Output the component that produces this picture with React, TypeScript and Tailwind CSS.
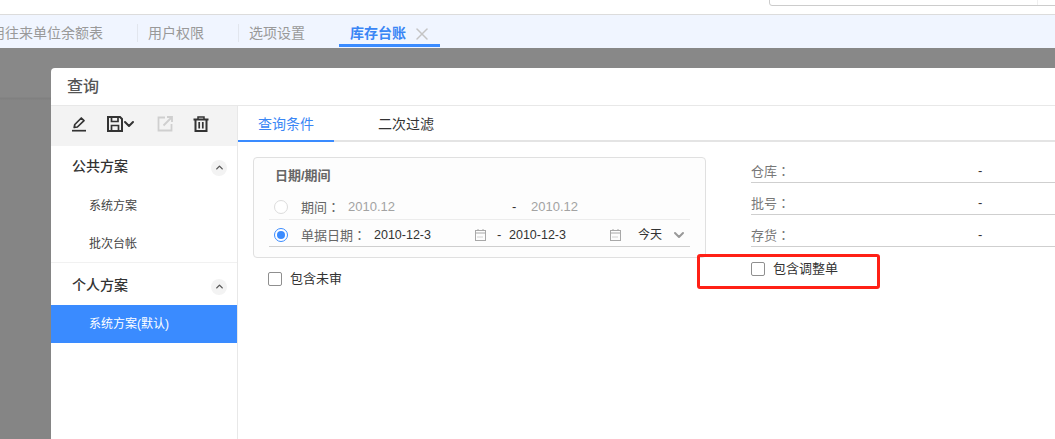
import { ChevronDown, ChevronUp, X } from "lucide-react";

const PencilIcon = () => (
    <svg width="16" height="16" viewBox="0 0 16 16" fill="none" stroke="#333" strokeWidth="1.7">
        <path d="M3.2 11.5 L3.8 8.5 L10.3 2 L13 4.7 L6.4 11 Z" strokeLinejoin="round" />
        <path d="M1 14.7 H15" strokeWidth="1.7" />
    </svg>
);

const SaveIcon = () => (
    <svg width="16" height="16" viewBox="0 0 16 16" fill="none" stroke="#333" strokeWidth="2">
        <path d="M1 1 H13 L15 3 V15 H1 Z" />
        <path d="M4.5 1 V5.5 H11 V1 M4.5 15 V9.5 H11.5 V15" strokeWidth="1.7" />
    </svg>
);

const ShareIcon = () => (
    <svg width="16" height="16" viewBox="0 0 16 16" fill="none" stroke="#cfcfcf" strokeWidth="1.8">
        <path d="M8 1.5 H1.5 V14.5 H14.5 V8" />
        <path d="M6.5 9.5 L14.5 1.5 M10 1 H15 V6" />
    </svg>
);

const TrashIcon = () => (
    <svg width="16" height="16" viewBox="0 0 16 16" fill="none" stroke="#333" strokeWidth="2">
        <path d="M0.5 3.5 H15.5" />
        <path d="M5 3 V1 H11 V3" strokeWidth="1.5" />
        <path d="M2.5 4 V15 H13.5 V4" />
        <path d="M6.2 6 V12.5 M9.8 6 V12.5" strokeWidth="1.7" />
    </svg>
);

const CalendarIcon = () => (
    <svg width="11" height="12" viewBox="0 0 11 12" fill="none" stroke="#a8a8a8" strokeWidth="1">
        <rect x="0.5" y="1.5" width="10" height="10" />
        <path d="M0.5 4 H10.5 M3 0 V2 M8 0 V2" />
        <path d="M2.5 8 H8.5" strokeDasharray="1 1" />
    </svg>
);

const Checkbox = () => <span className="w-[14px] h-[14px] bg-white border border-[#8f8f8f] rounded-[2px] shrink-0" />;

const Colon = () => <span className="font-['Noto_Sans_CJK_TC',sans-serif]">：</span>;

const SideGroup = ({ title }: { title: string }) => (
    <div className="h-[40px] flex items-center justify-between pl-[21px] pr-[10px]">
        <span className="text-[14px] font-medium text-[#333]">{title}</span>
        <span className="w-4 h-4 rounded-full bg-[#f3f3f3] flex items-center justify-center mt-[3px]">
            <ChevronUp size={11} strokeWidth={3} className="text-[#555]" />
        </span>
    </div>
);

const FilterRow = ({ label }: { label: string }) => (
    <div className="h-[32px] flex items-end border-b border-[#cfcfcf] w-[320px]">
        <span className="w-[227px] text-[13px] leading-[20px] text-[#777]">{label}<Colon /></span>
        <span className="text-[13px] leading-[20px] text-[#333] -translate-y-px">-</span>
    </div>
);

const App = () => {
    return (
        <div className="w-[1055px] h-[439px] overflow-hidden relative flex flex-col bg-[#888888] font-['Liberation_Sans','Noto_Sans_CJK_SC',sans-serif]">
            {/* Top bar */}
            <div className="h-[15px] shrink-0 bg-white border-b border-[#dcdcdc] overflow-hidden">
                <div className="ml-[769px] -mt-[20px] h-[26px] w-[320px] border border-[#cccccc] rounded-[3px] bg-white">
                    <div className="ml-[267px] h-full w-px bg-[#f0f0f0]" />
                </div>
            </div>

            {/* Page tabs */}
            <div className="h-[33px] shrink-0 bg-[#f0f5ff] flex items-start -ml-[22px] text-[14px] text-[#999] overflow-hidden">
                <div className="w-[159px] h-[18px] mt-[9px] pl-[13px] leading-[18px] whitespace-nowrap">用往来单位余额表</div>
                <div className="w-[101px] h-[18px] mt-[9px] border-l border-[#e2e6ee] pl-[10px] leading-[18px]">用户权限</div>
                <div className="w-[101px] h-[18px] mt-[9px] border-l border-[#e2e6ee] pl-[10px] leading-[18px]">选项设置</div>
                <div className="w-[101px] h-[32px] flex items-start pt-[9px] relative">
                    <span className="pl-[11px] leading-[18px] font-bold text-[#3a86f5]">库存台账</span>
                    <X size={20} strokeWidth={1.8} className="ml-[6px] text-[#c4c4c4]" />
                    <span className="absolute left-0 right-0 bottom-0 h-[3px] bg-[#3a8bff]" />
                </div>
            </div>

            {/* Dimmed page */}
            <div className="flex-1 pl-[51px] pt-[20px] min-h-0 bg-[linear-gradient(#888888_49px,#808080_50px,#808080_51px,#858585_52px)]">
                <div className="w-[1100px] h-[400px] bg-white rounded-t-[4px] flex flex-col">
                    <div className="h-[38px] shrink-0 border-b border-[#e8e8e8] pl-[16px] flex items-center text-[16px] font-medium text-[#555]">查询</div>
                    <div className="flex flex-1">
                        {/* Sidebar */}
                        <div className="w-[187px] shrink-0 border-r border-[#e8e8e8]">
                            <div className="h-[40px] bg-[#f3f3f3] flex items-center pl-[20px] pb-[4px]">
                                <PencilIcon />
                                <span className="ml-[20px]"><SaveIcon /></span>
                                <ChevronDown size={16} strokeWidth={3} className="-ml-[2px] text-[#333]" />
                                <span className="ml-[20px]"><ShareIcon /></span>
                                <span className="ml-[20px]"><TrashIcon /></span>
                            </div>
                            <SideGroup title="公共方案" />
                            <div className="text-[12px] text-[#444] border-b border-[#f1f1f1]">
                                <div className="h-[38px] pl-[38px] pt-[2px] flex items-center">系统方案</div>
                                <div className="h-[38px] pl-[38px] pt-[2px] flex items-center">批次台帐</div>
                            </div>
                            <div className="pt-[2px]">
                                <SideGroup title="个人方案" />
                            </div>
                            <div className="h-[38px] bg-[#3a8bff] pl-[38px] flex items-center text-[12px] text-white">系统方案(默认)</div>
                        </div>

                        {/* Content */}
                        <div className="flex-1">
                            <div className="h-[36px] flex text-[14px] border-b-2 border-[#e4e4e4]">
                                <div className="w-[96px] h-[36px] shrink-0 pt-[9px] text-center leading-[18px] text-[#3a86f5] border-b-2 border-[#3a8bff]">查询条件</div>
                                <div className="ml-[44px] pt-[9px] leading-[18px] text-[#333]">二次过滤</div>
                            </div>
                            <div className="flex pl-[15px] pt-[15px]">
                                <div className="w-[453px] shrink-0">
                                    <div className="h-[101px] bg-[#fdfdfd] border border-[#e0e0e0] rounded-[4px] pl-[15px] pr-[15px] text-[13px]">
                                        <div className="h-[37px] pl-[6px] pt-[9px] leading-[18px] font-bold text-[#666]">日期/期间</div>
                                        <div className="h-[25px] flex items-center border-b border-[#ececec]">
                                            <span className="ml-[5px] w-[14px] h-[14px] rounded-full border border-[#dcdcdc] bg-white" />
                                            <span className="ml-[13px] w-[47px] text-[#666]">期间<Colon /></span>
                                            <span className="text-[#a3a3a3] w-[164px]">2010.12</span>
                                            <span className="text-[#333] w-[19px]">-</span>
                                            <span className="text-[#a3a3a3]">2010.12</span>
                                        </div>
                                        <div className="h-[27px] flex items-center border-b border-[#cfcfcf] pt-[4px]">
                                            <span className="ml-[5px] w-[14px] h-[14px] rounded-full border border-[#3a8bff] bg-white flex items-center justify-center">
                                                <span className="w-2 h-2 rounded-full bg-[#3a8bff]" />
                                            </span>
                                            <span className="ml-[13px] w-[73px] text-[#666]">单据日期<Colon /></span>
                                            <span className="w-[101px] text-[12.5px] text-[#333]">2010-12-3</span>
                                            <CalendarIcon />
                                            <span className="ml-[11px] w-[12px] text-[#333]">-</span>
                                            <span className="w-[101px] text-[12.5px] text-[#333]">2010-12-3</span>
                                            <CalendarIcon />
                                            <span className="ml-[17px] w-[33px] text-[12px] text-[#333]">今天</span>
                                            <ChevronDown size={16} strokeWidth={3} className="text-[#999]" />
                                        </div>
                                    </div>
                                    <label className="flex items-center ml-[15px] mt-[11px] text-[13px] text-[#333]">
                                        <Checkbox />
                                        <span className="ml-[8px]">包含未审</span>
                                    </label>
                                </div>
                                <div className="ml-[45px] -mt-[6px]">
                                    <FilterRow label="仓库" />
                                    <FilterRow label="批号" />
                                    <FilterRow label="存货" />
                                    <label className="flex items-center mt-[12px] text-[13px] text-[#333]">
                                        <Checkbox />
                                        <span className="ml-[8px]">包含调整单</span>
                                    </label>
                                </div>
                            </div>
                        </div>
                    </div>
                </div>
            </div>

            {/* Annotation */}
            <div className="absolute left-[697px] top-[254px] w-[183px] h-[35px] border-[3px] border-[#ff2016] rounded-[3px]" />
        </div>
    );
};

export default App;
